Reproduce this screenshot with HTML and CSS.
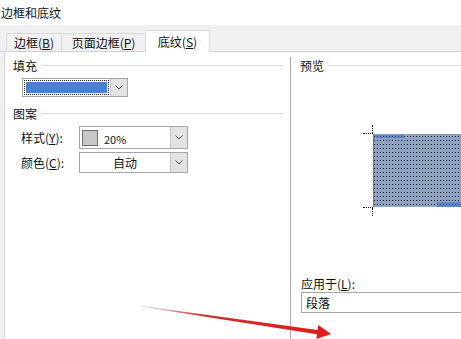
FILE: index.html
```html
<!DOCTYPE html>
<html lang="zh-CN">
<head>
    <meta charset="UTF-8">
    <title>边框和底纹</title>
    <link rel="stylesheet" href="styles.css">
</head>
<body>
    <div class="title">边框和底纹</div>

    <div class="tabs">
        <div class="tab tab-border">边框(<u>B</u>)</div>
        <div class="tab tab-page">页面边框(<u>P</u>)</div>
        <div class="tab active">底纹(<u>S</u>)</div>
    </div>

    <div class="page">
        <div class="panel">
            <div class="left">
                <div class="group-head">填充</div>
                <div class="color-pick">
                    <div class="color-field"><span class="color-bar"></span></div>
                    <div class="drop">
                        <svg width="8" height="5" viewBox="0 0 8 5"><path d="M0.5 0.5 L4 4 L7.5 0.5" fill="none" stroke="#555" stroke-width="1"/></svg>
                    </div>
                </div>

                <div class="group-head second">图案</div>
                <div class="row">
                    <span class="label">样式(<u>Y</u>):</span>
                    <div class="combo tall">
                        <span class="gray-swatch"></span>
                        <span class="combo-text">20%</span>
                        <div class="drop">
                            <svg width="8" height="5" viewBox="0 0 8 5"><path d="M0.5 0.5 L4 4 L7.5 0.5" fill="none" stroke="#555" stroke-width="1"/></svg>
                        </div>
                    </div>
                </div>
                <div class="row">
                    <span class="label">颜色(<u>C</u>):</span>
                    <div class="combo">
                        <span class="combo-text center">自动</span>
                        <div class="drop">
                            <svg width="8" height="5" viewBox="0 0 8 5"><path d="M0.5 0.5 L4 4 L7.5 0.5" fill="none" stroke="#555" stroke-width="1"/></svg>
                        </div>
                    </div>
                </div>
            </div>

            <div class="right">
                <div class="group-head wide">预览</div>
                <div class="preview">
                    <span class="mark mark-tl-h"></span>
                    <span class="mark mark-tl-v"></span>
                    <span class="mark mark-bl-h"></span>
                    <span class="mark mark-bl-v"></span>
                    <span class="hi hi-top"></span>
                    <span class="hi hi-bottom"></span>
                </div>
                <div class="apply-label">应用于(<u>L</u>):</div>
                <div class="apply-input">段落</div>
            </div>
        </div>

        <svg class="arrow" width="461" height="339" viewBox="0 0 461 339">
            <defs>
                <linearGradient id="tail" x1="140" y1="306" x2="331" y2="334" gradientUnits="userSpaceOnUse">
                    <stop offset="0" stop-color="#b05050" stop-opacity="0.2"/>
                    <stop offset="0.35" stop-color="#c83028"/>
                    <stop offset="1" stop-color="#e21d18"/>
                </linearGradient>
            </defs>
            <polygon points="140,305.8 317.5,330 318.2,325 331,334 316.2,339 316.9,334.2 140,306.4" fill="url(#tail)"/>
        </svg>
    </div>
</body>
</html>
```

FILE: styles.css
```css
* {
    box-sizing: border-box;
}

body {
    margin: 0;
    width: 461px;
    height: 339px;
    overflow: hidden;
    background: white;
    font-family: 'Noto Sans CJK SC', 'Liberation Sans', sans-serif;
    font-size: 12px;
    color: #111;
}

u {
    text-underline-offset: 1px;
}

.title {
    height: 25px;
    padding: 5px 0 0 1px;
    line-height: 16px;
    font-size: 12px;
}

/* вкладки */
.tabs {
    display: flex;
    align-items: flex-end;
    height: 27px;
    padding-left: 6px;
    background: #f0f0f0;
    border-bottom: 1px solid #d0d0d0;
}

.tab {
    height: 18px;
    display: flex;
    align-items: center;
    justify-content: center;
    border: 1px solid #d9d9d9;
    border-bottom: none;
    background: #f0f0f0;
    line-height: 1;
}

.tab-border {
    width: 56px;
}

.tab-page {
    width: 84px;
    border-left: none;
}

.tab.active {
    width: 64px;
    height: 22px;
    margin-bottom: -1px;
    background: white;
    border-left: none;
}

.page {
    position: relative;
    height: 288px;
    background: #f0f0f0;
}

.panel {
    display: flex;
    height: 100%;
    margin-left: 4px;
    background: white;
    border-left: 1px solid #d6d6d6;
}

.left {
    width: 286px;
    margin-top: 5px;
    border-right: 1px solid #a8a8a8;
    flex: none;
}

.right {
    flex: 1;
    margin-top: 5px;
    overflow: hidden;
}

.group-head {
    display: flex;
    align-items: center;
    height: 16px;
    padding-left: 8px;
    margin-right: 7px;
    gap: 4px;
}

.group-head::after {
    content: '';
    flex: 1;
    height: 1px;
    background: #d8d8d8;
}

.group-head.second {
    margin-top: 8px;
}

.group-head.wide {
    padding-left: 9px;
    margin-right: 0;
}

/* выбор цвета заливки */
.color-pick {
    display: flex;
    width: 106px;
    height: 19px;
    margin: 5px 0 0 17px;
    border: 1px solid #a6a6a6;
}

.color-field {
    flex: 1;
    padding: 1px;
    background: white;
}

.color-bar {
    display: block;
    height: 100%;
    border: 1px dotted #222;
    background: #4a7fd1;
    background-clip: content-box;
    padding: 1px;
}

.drop {
    width: 17px;
    display: flex;
    align-items: center;
    justify-content: center;
    background: #e3e3e3;
    border-left: 1px solid #c6c6c6;
    flex: none;
}

.row {
    display: flex;
    align-items: center;
    margin-top: 5px;
    padding-left: 16px;
}

.row + .row {
    margin-top: 3px;
}

.label {
    width: 58px;
    flex: none;
}

.combo {
    display: flex;
    align-items: center;
    width: 109px;
    height: 21px;
    border: 1px solid #a6a6a6;
    background: white;
}

.combo.tall {
    height: 23px;
}

.combo .drop {
    align-self: stretch;
}

.gray-swatch {
    width: 16px;
    height: 16px;
    margin-left: 2px;
    background: #c8c8c8;
    border: 1px solid #6f6f6f;
    flex: none;
}

.combo-text {
    flex: 1;
    padding-left: 6px;
    padding-top: 3px;
    font-size: 11px;
}

.combo-text.center {
    text-align: center;
    padding: 0;
    font-size: 12px;
}

/* превью */
.preview {
    position: relative;
    width: 110px;
    height: 73px;
    margin: 61px 0 0 82px;
    border-top: 1px solid #8c9ab2;
    border-left: 1px solid #66789a;
    background-color: #8ea2c2;
    background-image:
        repeating-linear-gradient(90deg, transparent 0 1px, #8ea2c2 1px 3px),
        repeating-linear-gradient(180deg, transparent 0 1px, #1c1c24 1px 2px, transparent 2px 4px);
}

.mark {
    position: absolute;
    border: 0 dotted #111;
}

.mark-tl-h {
    left: -11px;
    top: -2px;
    width: 10px;
    border-top-width: 1px;
}

.mark-tl-v {
    left: -2px;
    top: -10px;
    height: 8px;
    border-left-width: 1px;
}

.mark-bl-h {
    left: -11px;
    bottom: -1px;
    width: 10px;
    border-top-width: 1px;
}

.mark-bl-v {
    left: -2px;
    bottom: -9px;
    height: 8px;
    border-left-width: 1px;
}

.hi {
    position: absolute;
    background: rgba(60, 110, 210, 0.55);
}

.hi-top {
    left: 0;
    top: 0;
    width: 30px;
    height: 3px;
}

.hi-bottom {
    right: 0;
    bottom: 0;
    width: 46px;
    height: 5px;
}

.apply-label {
    margin: 70px 0 0 10px;
    height: 15px;
    line-height: 14px;
}

.apply-input {
    height: 21px;
    margin-left: 10px;
    margin-right: -20px;
    padding: 1px 4px;
    border: 1px solid #a6a6a6;
    line-height: 17px;
}

.arrow {
    position: absolute;
    left: 0;
    top: -52px;
    pointer-events: none;
}
```
